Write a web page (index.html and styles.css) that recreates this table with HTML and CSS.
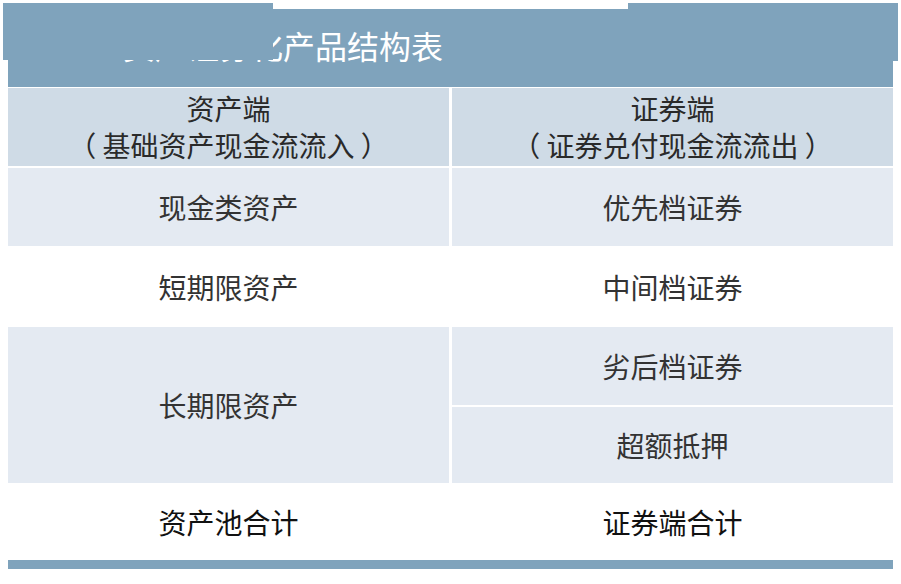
FILE: index.html
```html
<!DOCTYPE html>
<html lang="zh-CN">
<head>
<meta charset="utf-8">
<title>资产证券化产品结构表</title>
<link rel="stylesheet" href="styles.css">
</head>
<body>
<div class="page">
  <div class="title-bar">
    <span class="title">资产证券化产品结构表</span>
    <div class="patch patch-left"></div>
    <div class="patch patch-right"></div>
  </div>
  <div class="table">
    <div class="cell head">资产端<br>（ 基础资产现金流流入 ）</div>
    <div class="cell head">证券端<br>（ 证券兑付现金流流出 ）</div>
    <div class="cell light">现金类资产</div>
    <div class="cell light">优先档证券</div>
    <div class="cell plain">短期限资产</div>
    <div class="cell plain">中间档证券</div>
    <div class="cell light span2">长期限资产</div>
    <div class="cell light">劣后档证券</div>
    <div class="cell light">超额抵押</div>
    <div class="cell plain total">资产池合计</div>
    <div class="cell plain total">证券端合计</div>
  </div>
  <div class="bottom-bar"></div>
</div>
</body>
</html>
```

FILE: styles.css
```css
html, body {
  margin: 0;
  padding: 0;
  background: #ffffff;
}
.page {
  width: 885px;
  padding: 9px 0 0 8px;
  font-family: "Noto Sans CJK SC", "Noto Sans", sans-serif;
}
.title-bar {
  position: relative;
  height: 78px;
  background: #7fa3bc;
  display: flex;
  align-items: flex-start;
  padding-top: 19px;
  padding-left: 115px;
  box-sizing: border-box;
}
.title {
  color: #ffffff;
  font-size: 32px;
  line-height: 34px;
}
.patch {
  position: absolute;
  background: #7fa3bc;
  height: 57px;
  top: -6px;
}
.patch-left {
  left: -5px;
  width: 270px;
}
.patch-right {
  left: 620px;
  width: 270px;
  height: 58px;
}
.table {
  margin-top: 1px;
  display: grid;
  grid-template-columns: 441px 441px;
  grid-template-rows: 78px 78px 77px 78px 76px 73px;
  column-gap: 3px;
  row-gap: 2px;
}
.cell {
  display: flex;
  align-items: center;
  justify-content: center;
  text-align: center;
  font-size: 28px;
  color: #333333;
}
.head {
  background: #cfdbe6;
  line-height: 37px;
  color: #2a2a2a;
}
.light {
  background: #e4eaf2;
}
.plain {
  background: #ffffff;
}
.span2 {
  grid-row: span 2;
}
.total {
  color: #111111;
}
.bottom-bar {
  margin-top: 2px;
  height: 9px;
  background: #7fa3bc;
}
```
